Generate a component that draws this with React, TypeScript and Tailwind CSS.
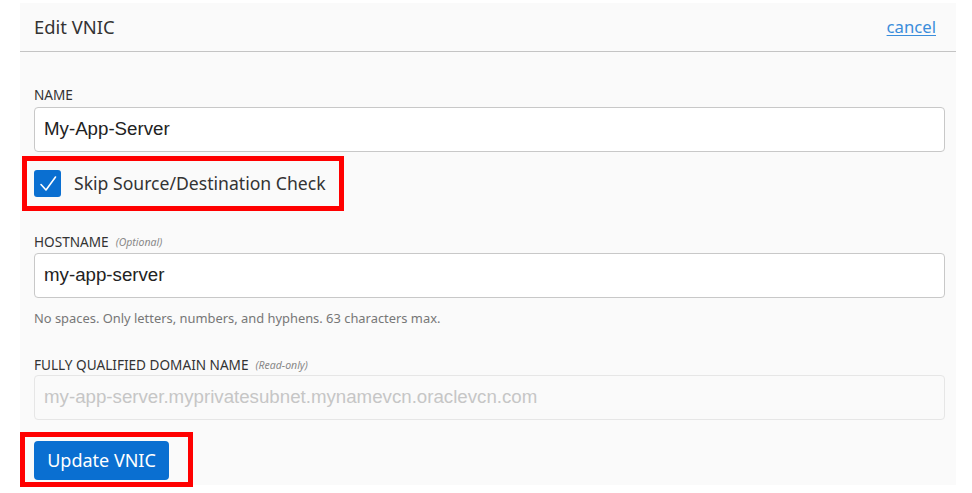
export default function App() {
  return (
    <div className="min-h-[493px] w-[972px] bg-white pt-[3px] font-['Noto_Sans','Open_Sans',sans-serif] text-[#333]">
      <div className="ml-[20px] h-[482px] w-[936px] bg-[#fafafa]">
        {/* Header */}
        <div className="flex h-[49px] items-center justify-between border-b border-[#c4c4c4] pl-[14px] pr-[20px]">
          <h2 className="text-[18.4px] text-[#333]">Edit VNIC</h2>
          <a href="#" className="text-[16.7px] text-[#3a8ddb] underline underline-offset-2">
            cancel
          </a>
        </div>

        <div className="pl-[14px] pr-[11px]">
          {/* Name */}
          <label className="mt-[35px] block h-[16px] text-[13.6px] leading-[16px] text-[#333]">NAME</label>
          <div className="mt-[4px] flex h-[45px] items-center rounded-[4px] border border-[#c8c8c8] bg-white px-[9px] font-['Liberation_Sans',Arial,sans-serif] text-[18.7px] text-[#222]">
            My-App-Server
          </div>

          {/* Skip source/dest check */}
          <div className="-ml-[12px] mt-[4px] flex h-[55px] w-[322px] items-center gap-[13px] border-[5px] border-[#ff0000] pl-[7px]">
            <span className="flex h-[27px] w-[27px] items-center justify-center rounded-[3px] bg-[#0a6fd1]">
              <svg width="20" height="20" viewBox="0 0 20 20" fill="none">
                <path d="M3 10.5 L8 16 L17.5 3" stroke="white" strokeWidth="1.6" strokeLinecap="round" strokeLinejoin="round" />
              </svg>
            </span>
            <span className="text-[17.6px] text-[#333]">Skip Source/Destination Check</span>
          </div>

          {/* Hostname */}
          <label className="mt-[23px] flex h-[16px] items-center gap-[7px] text-[13.6px] leading-[16px] text-[#333]">
            HOSTNAME <span className="text-[10.5px] italic text-[#888]">(Optional)</span>
          </label>
          <div className="mt-[3px] flex h-[45px] items-center rounded-[4px] border border-[#c8c8c8] bg-white px-[9px] font-['Liberation_Sans',Arial,sans-serif] text-[18.7px] text-[#222]">
            my-app-server
          </div>
          <p className="mt-[12px] h-[16px] text-[12.9px] leading-[16px] text-[#777]">
            No spaces. Only letters, numbers, and hyphens. 63 characters max.
          </p>

          {/* FQDN */}
          <label className="mt-[31px] flex h-[16px] items-center gap-[7px] text-[13.6px] leading-[16px] text-[#333]">
            FULLY QUALIFIED DOMAIN NAME <span className="text-[10.5px] italic text-[#888]">(Read-only)</span>
          </label>
          <div className="mt-[2px] flex h-[45px] items-center rounded-[4px] border border-[#e6e6e6] bg-[#fafafa] px-[9px] font-['Liberation_Sans',Arial,sans-serif] text-[18.7px] text-[#c6c6c6]">
            my-app-server.myprivatesubnet.mynamevcn.oraclevcn.com
          </div>

          {/* Submit */}
          <div className="-ml-[14px] mt-[12px] w-fit border-[5px] border-[#ff0000] pb-[2px] pl-[9px] pr-[19px] pt-[4px]">
            <button className="h-[39px] w-[135px] rounded-[4px] bg-[#0a6fd1] text-[18px] text-white">
              Update VNIC
            </button>
          </div>
        </div>
      </div>
    </div>
  );
}
